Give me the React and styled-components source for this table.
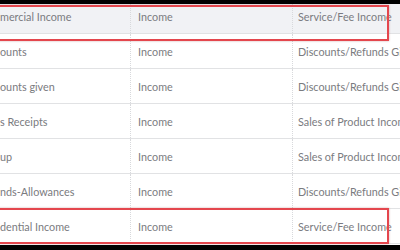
import React from 'react'
import styled, { createGlobalStyle } from 'styled-components'

const GlobalStyle = createGlobalStyle`
  html, body {
    margin: 0;
    padding: 0;
    background: #000;
  }
`

const rows = [
  { name: 'mercial Income', type: 'Income', detail: 'Service/Fee Income', tint: true },
  { name: 'ounts', type: 'Income', detail: 'Discounts/Refunds Given' },
  { name: 'ounts given', type: 'Income', detail: 'Discounts/Refunds Given' },
  { name: 's Receipts', type: 'Income', detail: 'Sales of Product Income' },
  { name: 'up', type: 'Income', detail: 'Sales of Product Income' },
  { name: 'nds-Allowances', type: 'Income', detail: 'Discounts/Refunds Given' },
  { name: 'dential Income', type: 'Income', detail: 'Service/Fee Income' },
]

const App = () => {
  return (
    <>
      <GlobalStyle />
      <Frame>
        <Sheet>
          <Table>
            {rows.map((r, i) => (
              <Row key={i} $tint={r.tint}>
                <Cell>{r.name}</Cell>
                <Cell $pad>{r.type}</Cell>
                <Cell $pad>{r.detail}</Cell>
              </Row>
            ))}
          </Table>
          <Highlight $top={1} />
          <Highlight $top={204} />
        </Sheet>
      </Frame>
    </>
  )
}

const Frame = styled.div`
  width: 400px;
  height: 250px;
  background: #000;
  padding-top: 4px;
  box-sizing: border-box;
`

const Sheet = styled.div`
  position: relative;
  width: 400px;
  height: 241px;
  background: #fff;
  overflow: hidden;
`

const Table = styled.div`
  margin-top: -5px;
  display: flex;
  flex-direction: column;
`

const Row = styled.div`
  display: grid;
  grid-template-columns: 131px 162px 1fr;
  height: 35px;
  box-sizing: border-box;
  border-bottom: 1px solid #e1e2e4;
  background: ${p => (p.$tint ? '#f1f2f5' : '#fff')};
`

const Cell = styled.div`
  display: flex;
  align-items: center;
  padding-left: ${p => (p.$pad ? '7px' : '0')};
  border-right: 1px dotted #d8d9dc;
  white-space: nowrap;
  overflow: hidden;
  font-family: Lato, "Open Sans", sans-serif;
  font-size: 10.8px;
  color: #7a7b80;

  &:last-child {
    border-right: none;
    padding-left: 5px;
  }
`

const Highlight = styled.div`
  position: absolute;
  left: -4px;
  top: ${p => p.$top}px;
  width: 393px;
  height: 36px;
  box-sizing: border-box;
  border: 2px solid #e4464d;
  box-shadow: 0 0 2px rgba(120, 20, 20, 0.35);
  pointer-events: none;
`

export default App
